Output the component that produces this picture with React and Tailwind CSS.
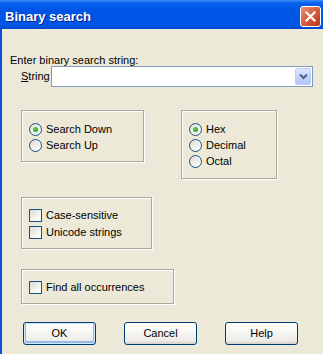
import React, { useState } from 'react';

const Radio = ({ checked, label, onClick }) => (
  <div className="flex items-center h-[13px] cursor-default" onClick={onClick}>
    <span className="w-[13px] h-[13px] rounded-full border border-[#1c5180] bg-[linear-gradient(135deg,#dcdcd4_0%,#f4f4f0_60%,#ffffff_100%)] flex items-center justify-center shrink-0">
      {checked && (
        <span className="w-[5px] h-[5px] rounded-full bg-[radial-gradient(circle_at_35%_35%,#5fd85f_0%,#21a121_70%,#1a8a1a_100%)]" />
      )}
    </span>
    <span className="ml-[4px] leading-[13px]">{label}</span>
  </div>
);

const Check = ({ checked, label, onClick }) => (
  <div className="flex items-center h-[13px] cursor-default" onClick={onClick}>
    <span className="w-[13px] h-[13px] border border-[#1c5180] bg-[linear-gradient(135deg,#dcdcd4_0%,#f4f4f0_60%,#ffffff_100%)] flex items-center justify-center shrink-0">
      {checked && (
        <svg width="9" height="9" viewBox="0 0 9 9">
          <path d="M1 4l2.5 2.5L8 1.5" fill="none" stroke="#21a121" strokeWidth="2" />
        </svg>
      )}
    </span>
    <span className="ml-[4px] leading-[13px]">{label}</span>
  </div>
);

const GroupBox = ({ className, children }) => (
  <div className={`border border-[#aca899] shadow-[inset_1px_1px_0_#ffffff,1px_1px_0_#ffffff] ${className}`}>
    {children}
  </div>
);

const Button = ({ children, isDefault }) => (
  <button
    className={`w-[73px] h-[23px] rounded-[3px] border border-[#003c74] bg-[linear-gradient(to_bottom,#ffffff_0%,#f4f4f0_50%,#ecebe6_85%,#d6d0c5_100%)] text-[11px] leading-[13px] text-black ${
      isDefault ? 'shadow-[inset_0_0_0_1px_#cee7ff,inset_0_-1px_0_2px_#98b8ea]' : ''
    }`}
  >
    {children}
  </button>
);

export default function App() {
  const [direction, setDirection] = useState('down');
  const [base, setBase] = useState('hex');
  const [caseSensitive, setCaseSensitive] = useState(false);
  const [unicode, setUnicode] = useState(false);
  const [findAll, setFindAll] = useState(false);

  return (
    <div className="w-[323px] h-[354px] flex flex-col overflow-hidden font-['Liberation_Sans',Arial,sans-serif] text-[11px] text-black">
      {/* Title bar */}
      <div className="h-[29px] shrink-0 flex items-start justify-between pl-[5px] pr-[2px] bg-[linear-gradient(to_bottom,#3d8cf6_0%,#0a62ec_10%,#0056e6_30%,#0054e3_60%,#0058e8_85%,#0046cf_100%)]">
        <span className="mt-[9px] text-[13px] leading-[16px] font-bold text-white [text-shadow:1px_1px_0_#0a1f8f]">
          Binary search
        </span>
        <div className="mt-[6px] w-[21px] h-[21px] rounded-[3px] border border-white bg-[linear-gradient(135deg,#e8917a_0%,#dc6a4a_35%,#c9492a_75%,#b8391c_100%)] flex items-center justify-center">
          <svg width="11" height="11" viewBox="0 0 11 11">
            <path d="M1.5 1.5l8 8M9.5 1.5l-8 8" stroke="#ffffff" strokeWidth="2.2" strokeLinecap="square" />
          </svg>
        </div>
      </div>

      {/* Body */}
      <div className="flex-1 bg-[#ece9d8] border-l-2 border-[#0a4fdd] pl-[8px] pt-[25px]">
        <div className="leading-[12px]">Enter binary search string:</div>

        <div className="flex items-center">
          <span className="ml-[11px] w-[30px] leading-[13px]">
            <span className="underline">S</span>tring
          </span>
          <div className="w-[262px] h-[21px] border border-[#7f9db9] bg-white flex justify-end items-center pr-[1px]">
            <div className="w-[16px] h-[17px] rounded-[2px] border border-[#b9cdf6] bg-[linear-gradient(to_bottom,#dde8fd_0%,#c4d4fb_50%,#b2c7f7_100%)] flex items-center justify-center">
              <svg width="9" height="7" viewBox="0 0 9 7">
                <path d="M1 1.5l3.5 3.5L8 1.5" fill="none" stroke="#4d6185" strokeWidth="2" />
              </svg>
            </div>
          </div>
        </div>

        <div className="flex items-start mt-[23px] ml-[11px]">
          <GroupBox className="w-[123px] h-[52px] pl-[7px] pt-[12px]">
            <div className="flex flex-col gap-[3px]">
              <Radio checked={direction === 'down'} label="Search Down" onClick={() => setDirection('down')} />
              <Radio checked={direction === 'up'} label="Search Up" onClick={() => setDirection('up')} />
            </div>
          </GroupBox>
          <GroupBox className="ml-[37px] w-[96px] h-[69px] pl-[7px] pt-[12px]">
            <div className="flex flex-col gap-[3px]">
              <Radio checked={base === 'hex'} label="Hex" onClick={() => setBase('hex')} />
              <Radio checked={base === 'dec'} label="Decimal" onClick={() => setBase('dec')} />
              <Radio checked={base === 'oct'} label="Octal" onClick={() => setBase('oct')} />
            </div>
          </GroupBox>
        </div>

        <GroupBox className="mt-[18px] ml-[11px] w-[131px] h-[52px] pl-[7px] pt-[11px]">
          <div className="flex flex-col gap-[4px]">
            <Check checked={caseSensitive} label="Case-sensitive" onClick={() => setCaseSensitive(!caseSensitive)} />
            <Check checked={unicode} label="Unicode strings" onClick={() => setUnicode(!unicode)} />
          </div>
        </GroupBox>

        <GroupBox className="mt-[20px] ml-[11px] w-[153px] h-[35px] pl-[7px] pt-[11px]">
          <Check checked={findAll} label="Find all occurrences" onClick={() => setFindAll(!findAll)} />
        </GroupBox>

        <div className="flex gap-[28px] mt-[18px] ml-[13px]">
          <Button isDefault>OK</Button>
          <Button>Cancel</Button>
          <Button>Help</Button>
        </div>
      </div>
    </div>
  );
}
